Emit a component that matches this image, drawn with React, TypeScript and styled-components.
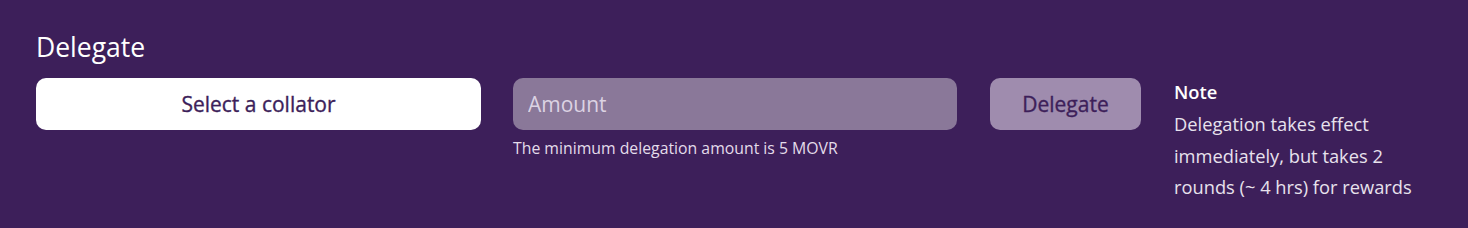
import styled, { createGlobalStyle } from "styled-components";

const GlobalStyle = createGlobalStyle`
  html, body {
    margin: 0;
    padding: 0;
    background: #3d1f5a;
  }
  body {
    font-family: "Open Sans", "Noto Sans", sans-serif;
  }
`;

const Panel = styled.section`
  box-sizing: border-box;
  width: 1468px;
  height: 228px;
  background: #3d1f5a;
  padding: 30px 34px 0 36px;
  display: flex;
  flex-direction: column;
  gap: 14px;
`;

const Title = styled.h2`
  margin: 0;
  font-size: 26.5px;
  font-weight: 400;
  line-height: 34px;
  color: #ffffff;
`;

const Row = styled.div`
  display: flex;
  align-items: flex-start;
  gap: 32px;

  & > * {
    flex-shrink: 0;
  }
`;

const SelectButton = styled.button`
  width: 445px;
  height: 52px;
  border: none;
  border-radius: 10px;
  background: #ffffff;
  color: #3d1f5a;
  font-family: inherit;
  font-size: 21px;
  font-weight: 400;
  -webkit-text-stroke: 0.35px #3d1f5a;
  cursor: pointer;
`;

const AmountField = styled.div`
  width: 444px;
  display: flex;
  flex-direction: column;
  gap: 8px;
`;

const AmountInput = styled.input`
  box-sizing: border-box;
  width: 100%;
  height: 52px;
  border: none;
  border-radius: 10px;
  background: #8a7899;
  padding: 0 15px;
  color: #ffffff;
  font-family: inherit;
  font-size: 21px;
  outline: none;

  &::placeholder {
    color: #dcd3e3;
  }
`;

const Hint = styled.span`
  font-size: 15.8px;
  color: #e4dcea;
  line-height: 20px;
`;

const DelegateButton = styled.button`
  width: 151px;
  height: 52px;
  margin-left: 1px;
  border: none;
  border-radius: 10px;
  background: #9f8cae;
  color: #3d1f5a;
  font-family: inherit;
  font-size: 21px;
  font-weight: 400;
  -webkit-text-stroke: 0.35px #3d1f5a;
  cursor: not-allowed;
`;

const Note = styled.div`
  width: 258px;
  margin-left: 1px;
  margin-top: 2px;
  display: flex;
  flex-direction: column;
  color: #e8e2ed;
  font-size: 18.3px;
  line-height: 31.5px;
`;

const NoteTitle = styled.strong`
  font-weight: 600;
  color: #ffffff;
  line-height: 24px;
  margin-bottom: 4px;
`;

export default function App() {
  return (
    <>
      <GlobalStyle />
      <Panel>
        <Title>Delegate</Title>
        <Row>
          <SelectButton>Select a collator</SelectButton>
          <AmountField>
            <AmountInput placeholder="Amount" />
            <Hint>The minimum delegation amount is 5 MOVR</Hint>
          </AmountField>
          <DelegateButton>Delegate</DelegateButton>
          <Note>
            <NoteTitle>Note</NoteTitle>
            <span>
              Delegation takes effect immediately, but takes 2 rounds (~ 4
              hrs) for rewards
            </span>
          </Note>
        </Row>
      </Panel>
    </>
  );
}
